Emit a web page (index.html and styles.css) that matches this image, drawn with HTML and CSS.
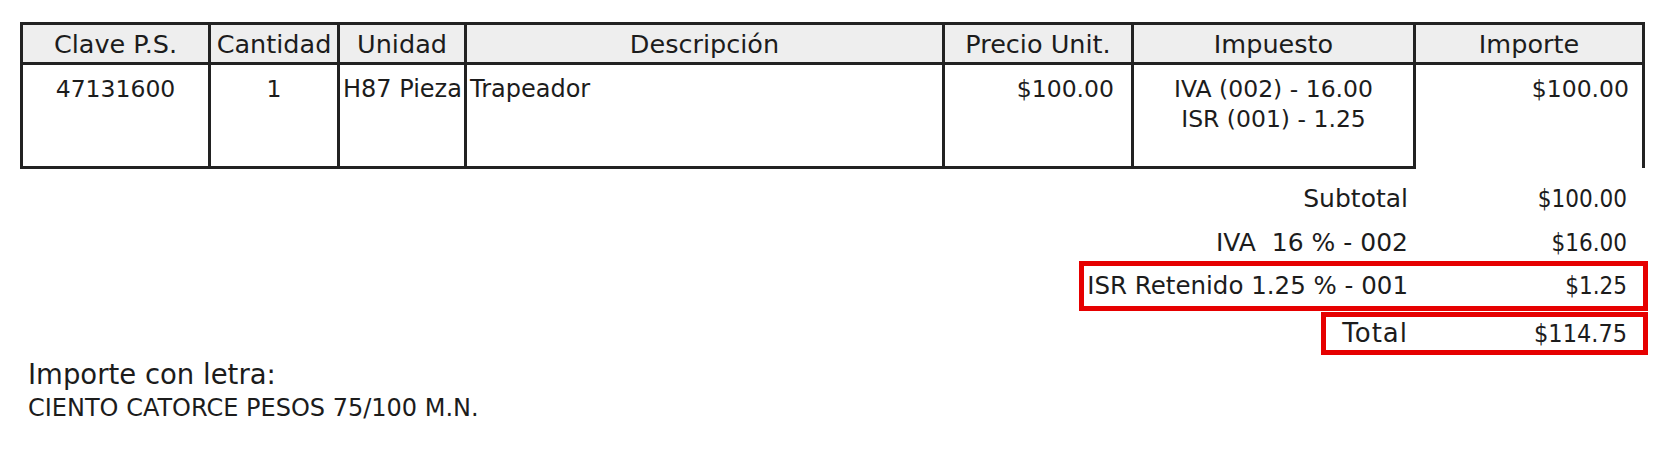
FILE: index.html
```html
<!DOCTYPE html>
<html lang="es">
<head>
<meta charset="utf-8">
<title>Factura</title>
<link rel="stylesheet" href="styles.css">
</head>
<body>
<div class="page">
  <table class="items">
    <colgroup>
      <col class="c-clave">
      <col class="c-cant">
      <col class="c-unidad">
      <col class="c-desc">
      <col class="c-precio">
      <col class="c-imp">
      <col class="c-importe">
    </colgroup>
    <thead>
      <tr>
        <th>Clave P.S.</th>
        <th>Cantidad</th>
        <th>Unidad</th>
        <th>Descripción</th>
        <th>Precio Unit.</th>
        <th>Impuesto</th>
        <th>Importe</th>
      </tr>
    </thead>
    <tbody>
      <tr>
        <td class="center">47131600</td>
        <td class="center">1</td>
        <td class="left tight">H87 Pieza</td>
        <td class="left tight">Trapeador</td>
        <td class="right pr-precio">$100.00</td>
        <td class="center">IVA (002) - 16.00<br>ISR (001) - 1.25</td>
        <td class="right pr-importe open-bottom">$100.00</td>
      </tr>
    </tbody>
  </table>

  <div class="totals">
    <div class="trow">
      <span class="lbl">Subtotal</span>
      <span class="val">$100.00</span>
    </div>
    <div class="trow">
      <span class="lbl">IVA&nbsp; 16 % - 002</span>
      <span class="val">$16.00</span>
    </div>
    <div class="trow boxed isr">
      <span class="lbl">ISR Retenido 1.25 % - 001</span>
      <span class="val">$1.25</span>
    </div>
    <div class="trow boxed total">
      <span class="lbl">Total</span>
      <span class="val">$114.75</span>
    </div>
  </div>

  <div class="letra">
    <div class="letra-title">Importe con letra:</div>
    <div class="letra-text">CIENTO CATORCE PESOS 75/100 M.N.</div>
  </div>
</div>
</body>
</html>
```

FILE: styles.css
```css
html, body {
  margin: 0;
  padding: 0;
  background: #ffffff;
}

body {
  font-family: "DejaVu Sans", "Open Sans", sans-serif;
  color: #1c1c1c;
  width: 1667px;
  height: 450px;
  overflow: hidden;
}

.page {
  padding: 22px 0 0 20px;
}

.items {
  border-collapse: collapse;
  table-layout: fixed;
  width: 1622px;
}

.c-clave { width: 188px; }
.c-cant { width: 129px; }
.c-unidad { width: 127px; }
.c-desc { width: 478px; }
.c-precio { width: 189px; }
.c-imp { width: 282px; }
.c-importe { width: 229px; }

.items th {
  background: #eeeeee;
  border: 3px solid #222222;
  height: 37px;
  padding: 0;
  font-weight: normal;
  font-size: 25.5px;
  text-align: center;
  vertical-align: middle;
  white-space: nowrap;
  overflow: hidden;
}

.items td {
  border: 3px solid #222222;
  height: 92px;
  padding: 9px 0 0 0;
  font-size: 23.5px;
  line-height: 30px;
  vertical-align: top;
  white-space: nowrap;
}

.items td.center { text-align: center; }
.items td.left { text-align: left; }
.items td.right { text-align: right; }
.items td.tight { padding-left: 3px; overflow: hidden; font-size: 24px; }
.items td.pr-precio { padding-right: 17px; }
.items td.pr-importe { padding-right: 13px; }
.items td.open-bottom { border-bottom: none; }

.totals {
  display: flex;
  flex-direction: column;
  align-items: flex-end;
  width: 1628px;
  margin-top: 8px;
  font-size: 25px;
}

.trow {
  display: flex;
  align-items: baseline;
  border: 5px solid transparent;
  line-height: 33px;
  white-space: nowrap;
}

.trow .lbl {
  text-align: right;
  padding-left: 3px;
}

.trow .val {
  width: 219px;
  padding-right: 16px;
  text-align: right;
  font-family: "DejaVu Sans Condensed", "Open Sans", sans-serif;
  font-stretch: condensed;
  font-size: 24px;
}

.trow.boxed {
  border-color: #e60000;
}

.trow.isr {
  margin-top: -4px;
  padding: 3px 0;
}

.trow.isr .lbl {
  font-size: 24.5px;
}

.trow.total {
  margin-top: 1px;
}

.trow.total .lbl {
  width: 82px;
  box-sizing: border-box;
  font-size: 26px;
  letter-spacing: 1px;
}

.trow.total .val {
  font-size: 25px;
}

.letra {
  margin-top: 2px;
  padding-left: 8px;
}

.letra-title {
  font-size: 27.5px;
  line-height: 34px;
}

.letra-text {
  font-size: 24px;
  line-height: 35px;
}
```
